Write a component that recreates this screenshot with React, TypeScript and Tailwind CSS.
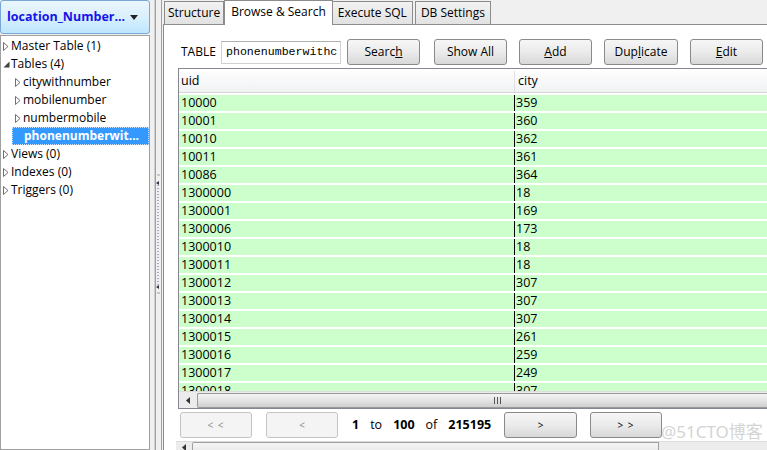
import React from "react";

const rows: [string, string][] = [
  ["10000", "359"],
  ["10001", "360"],
  ["10010", "362"],
  ["10011", "361"],
  ["10086", "364"],
  ["1300000", "18"],
  ["1300001", "169"],
  ["1300006", "173"],
  ["1300010", "18"],
  ["1300011", "18"],
  ["1300012", "307"],
  ["1300013", "307"],
  ["1300014", "307"],
  ["1300015", "261"],
  ["1300016", "259"],
  ["1300017", "249"],
  ["1300018", "307"],
];

function TriOpen() {
  return (
    <svg width="6" height="9" viewBox="0 0 6 9" className="shrink-0">
      <path d="M0.5 0.5 L5 4.5 L0.5 8.5 Z" fill="white" stroke="#707070" strokeWidth="1" />
    </svg>
  );
}
function TriDown() {
  return (
    <svg width="7" height="7" viewBox="0 0 7 7" className="shrink-0">
      <path d="M6.5 0.5 L6.5 6.5 L0.5 6.5 Z" fill="#404040" />
    </svg>
  );
}

function TreeRow({
  level,
  expanded,
  label,
  selected,
}: {
  level: number;
  expanded?: boolean;
  label: string;
  selected?: boolean;
}) {
  return (
    <div className={"h-[18px] flex items-center " + (level === 0 ? "pl-[2px]" : "pl-[14px]")}>
      <div className="w-[8px] flex items-center">{expanded ? <TriDown /> : <TriOpen />}</div>
      <div
        className={
          "h-[18px] flex items-center flex-1 " +
          (selected ? "bg-[#3399ff] text-white font-bold border border-dotted border-[#cce4ff] -ml-[11px] pl-[11px]" : "")
        }
      >
        <span className="whitespace-nowrap">{label}</span>
      </div>
    </div>
  );
}

function Btn({ children, w, disabled }: { children: React.ReactNode; w: string; disabled?: boolean }) {
  return (
    <div
      className={
        "h-[26px] rounded-[3px] border flex items-center justify-center shrink-0 " +
        w +
        " " +
        (disabled
          ? "border-[#c4c4c4] bg-[#f4f4f4] text-[#8a8a8a]"
          : "border-[#8a8a8a] bg-linear-to-b from-[#f6f6f6] via-[#ebebeb] to-[#d8d8d8] text-black")
      }
    >
      {children}
    </div>
  );
}

function LeftArrow() {
  return (
    <svg width="4" height="7" viewBox="0 0 4 7">
      <path d="M4 0 L0 3.5 L4 7 Z" fill="#333" />
    </svg>
  );
}

export default function App() {
  return (
    <div className="w-[767px] h-[450px] bg-[#f0f0f0] flex overflow-hidden relative font-['Open_Sans',sans-serif] text-[12px] text-black leading-none">
      {/* Left panel */}
      <div className="w-[150px] flex flex-col shrink-0">
        <div className="h-[34px] rounded-[3px] border border-[#7aa7d6] bg-linear-to-b from-[#eaf6fd] via-[#d9f0fc] to-[#bee6fd] flex items-center pl-[6px] pr-[11px]">
          <span className="text-[#1515e8] font-bold text-[12.5px] whitespace-nowrap flex-1">location_Number...</span>
          <svg width="8" height="5" viewBox="0 0 8 5">
            <path d="M0 0 L8 0 L4 5 Z" fill="#222" />
          </svg>
        </div>
        <div className="flex-1 mt-[1px] bg-white border border-[#a0a0a0] pt-[1px]">
          <TreeRow level={0} label="Master Table (1)" />
          <TreeRow level={0} expanded label="Tables (4)" />
          <TreeRow level={1} label="citywithnumber" />
          <TreeRow level={1} label="mobilenumber" />
          <TreeRow level={1} label="numbermobile" />
          <TreeRow level={1} label="phonenumberwit..." selected />
          <TreeRow level={0} label="Views (0)" />
          <TreeRow level={0} label="Indexes (0)" />
          <TreeRow level={0} label="Triggers (0)" />
        </div>
      </div>

      {/* Splitter */}
      <div className="w-[13px] shrink-0 flex relative">
        <div className="w-[4px]" />
        <div className="w-[2px] border-l border-[#d0d0d0] border-r border-r-[#a0a0a0]" />
        <div className="w-[5px] relative">
          <svg width="5" height="130" viewBox="0 0 5 130" className="absolute left-0 top-[173px]">
            <line x1="1" y1="2" x2="4" y2="2" stroke="#a0a0a0" />
            <path d="M3 8 L0 10 L3 12 Z" fill="#334" />
            <line x1="2" y1="12" x2="2" y2="112" stroke="#6060a0" strokeDasharray="1 2" />
            <path d="M3 112 L0 114 L3 116 Z" fill="#334" />
            <line x1="1" y1="120" x2="4" y2="120" stroke="#a0a0a0" />
          </svg>
        </div>
        <div className="w-[2px] border-l border-[#a0a0a0]" />
      </div>

      {/* Right panel */}
      <div className="flex-1 flex flex-col min-w-0">
        {/* Tabs */}
        <div className="h-[24px] flex items-end pl-[1px] shrink-0">
          <div className="h-[23px] px-[3px] border border-b-0 border-[#8c8c8c] bg-linear-to-b from-[#f2f2f2] to-[#e2e2e2] flex items-center">
            Structure
          </div>
          <div className="h-[25px] px-[6px] border border-b-0 border-[#8c8c8c] bg-white flex items-center -mb-[1px] relative z-10 pb-[3px]">
            Browse &amp; Search
          </div>
          <div className="h-[23px] px-[5px] border border-b-0 border-l-0 border-[#8c8c8c] bg-linear-to-b from-[#f2f2f2] to-[#e2e2e2] flex items-center">
            Execute SQL
          </div>
          <div className="h-[23px] px-[5px] ml-[2px] border border-b-0 border-[#8c8c8c] bg-linear-to-b from-[#f2f2f2] to-[#e2e2e2] flex items-center">
            DB Settings
          </div>
        </div>

        {/* Content */}
        <div className="flex-1 bg-white border-l border-t border-[#8c8c8c] flex flex-col pl-[14px] pt-[14px]">
          {/* Toolbar */}
          <div className="h-[26px] flex items-center shrink-0">
            <span className="ml-[3px] w-[40px]">TABLE</span>
            <div className="w-[120px] h-[23px] border border-[#d0d0d0] border-t-[#b0b0b0] flex items-center pl-[4px] font-['Liberation_Mono',monospace] text-[11.6px] overflow-hidden whitespace-nowrap">
              phonenumberwithc
            </div>
            <div className="ml-[6px]">
              <Btn w="w-[73px]">
                Searc<u>h</u>
              </Btn>
            </div>
            <div className="ml-[14px]">
              <Btn w="w-[73px]">Show All</Btn>
            </div>
            <div className="ml-[12px]">
              <Btn w="w-[73px]">
                <u>A</u>dd
              </Btn>
            </div>
            <div className="ml-[12px]">
              <Btn w="w-[74px]">
                Dup<u>l</u>icate
              </Btn>
            </div>
            <div className="ml-[12px]">
              <Btn w="w-[73px]">
                <u>E</u>dit
              </Btn>
            </div>
          </div>

          {/* Grid */}
          <div className="mt-[3px] h-[341px] -mr-[2px] border border-[#828790] flex flex-col overflow-hidden shrink-0">
            <div className="h-[24px] flex bg-linear-to-b from-white to-[#f1f2f4] border-b border-[#d5d5d5] shrink-0 pt-[2px]">
              <div className="w-[336px] border-r border-[#e0e0e0] pl-[2px] flex items-center text-[12.5px]">uid</div>
              <div className="flex-1 pl-[3px] flex items-center text-[12.5px]">city</div>
            </div>
            <div className="flex-1 overflow-hidden">
              {rows.map(([u, c]) => (
                <div key={u} className="h-[18px] border-t-2 border-white flex bg-[#ccffcc]">
                  <div className="w-[335px] pl-[2px] flex items-center text-[12.5px]">{u}</div>
                  <div className="flex-1 border-l border-black pl-[1px] flex items-center text-[12.5px]">{c}</div>
                </div>
              ))}
            </div>
            {/* horizontal scrollbar */}
            <div className="h-[17px] shrink-0 flex items-center bg-[#ececec] border-t border-[#dcdcdc]">
              <div className="w-[18px] flex justify-center">
                <LeftArrow />
              </div>
              <div className="flex-1 h-[15px] rounded-l-[2px] border border-r-0 border-[#9a9a9a] bg-linear-to-b from-[#f4f4f4] via-[#e4e4e4] to-[#cfcfcf] flex items-center pl-[296px]">
                <svg width="7" height="7" viewBox="0 0 7 7">
                  <line x1="0.5" y1="0" x2="0.5" y2="7" stroke="#555" />
                  <line x1="3.5" y1="0" x2="3.5" y2="7" stroke="#555" />
                  <line x1="6.5" y1="0" x2="6.5" y2="7" stroke="#555" />
                </svg>
              </div>
            </div>
          </div>

          {/* Pagination */}
          <div className="mt-[3px] h-[26px] flex items-center shrink-0 ml-[2px]">
            <Btn w="w-[72px]" disabled>
              <span className="text-[10px] tracking-[1px]">&lt; &lt;</span>
            </Btn>
            <div className="ml-[14px]">
              <Btn w="w-[72px]" disabled>
                <span className="text-[10px]">&lt;</span>
              </Btn>
            </div>
            <div className="w-[166px] flex items-center pl-[14px] gap-[11px] text-[12.5px]">
              <b>1</b>
              <span>to</span>
              <b>100</b>
              <span>of</span>
              <b>215195</b>
            </div>
            <Btn w="w-[73px]">
              <span className="text-[10px]">&gt;</span>
            </Btn>
            <div className="ml-[13px]">
              <Btn w="w-[72px]">
                <span className="text-[10px] tracking-[1px]">&gt; &gt;</span>
              </Btn>
            </div>
          </div>

          {/* Bottom scrollbar */}
          <div className="mt-[3px] h-[12px] flex items-start ml-[-2px] -mr-[2px] bg-[#ececec] border-t border-[#dcdcdc]">
            <div className="w-[16px] h-[10px] flex justify-center items-center">
              <LeftArrow />
            </div>
            <div className="w-[467px] h-[12px] rounded-tl-[2px] border border-b-0 border-[#a0a0a0] bg-linear-to-b from-[#f6f6f6] to-[#e6e6e6]" />
          </div>
        </div>
      </div>

      {/* watermark */}
      <div className="absolute left-[661px] top-[423px] text-[17px] text-[#d4d4d4] font-['Noto_Sans','Noto_Sans_CJK_SC',sans-serif] whitespace-nowrap">
        @51CTO博客
      </div>
    </div>
  );
}
